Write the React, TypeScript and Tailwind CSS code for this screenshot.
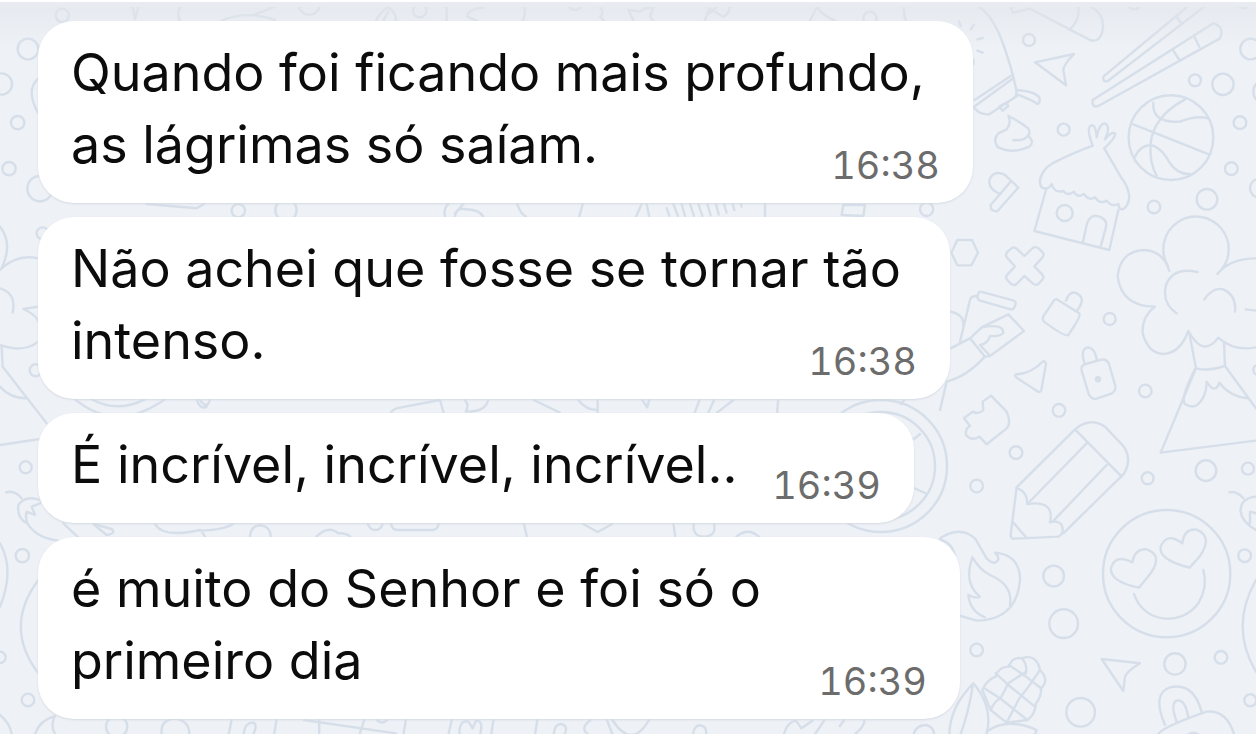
type Message = {
  lines: string[];
  time: string;
  width: string;
};

type Doodle = {
  x: number;
  y: number;
  scale: string;
  circles: number[][];
  paths: string[];
};

const messages: Message[] = [
  {
    lines: ["Quando foi ficando mais profundo,", "as lágrimas só saíam."],
    time: "16:38",
    width: "w-[935px]",
  },
  {
    lines: ["Não achei que fosse se tornar tão", "intenso."],
    time: "16:38",
    width: "w-[912px]",
  },
  {
    lines: ["É incrível, incrível, incrível.."],
    time: "16:39",
    width: "w-[876px]",
  },
  {
    lines: ["é muito do Senhor e foi só o", "primeiro dia"],
    time: "16:39",
    width: "w-[922px]",
  },
];

const doodles: Doodle[] = [
  {
    // chopsticks, basketball, hut
    x: 940,
    y: 0,
    scale: "0.3333",
    circles: [
      [267, 120, 18], [371, 389, 18], [765, 241, 18], [849, 253, 32], [932, 147, 31],
      [900, 368, 19], [874, 506, 19], [801, 598, 31], [642, 621, 19], [693, 413, 127],
      [374, 639, 24], [975, 275, 35], [958, 565, 28], [583, 8, 20], [911, 8, 17],
    ],
    paths: [
      "M118 22Q155 45 185 120Q215 200 230 275L228 288",
      "M104 300L212 228M100 322L218 236M104 325Q120 345 148 343L232 287",
      "M230 270Q290 275 299 295Q300 310 292 312Q275 300 235 285",
      "M178 320L200 308L205 318L188 332Z",
      "M92 88l10-14M112 118l16-4M112 152l16 6M57 64l5 14M100 180v12",
      "M212 22L220 38L270 26L450 120Q480 130 488 90Q495 45 455 22M415 22Q420 60 388 90",
      "M285 187L402 162Q370 195 370 210L378 256Z",
      "M205 348Q240 365 265 385Q272 400 265 408Q285 425 268 440Q215 465 172 440Q158 420 175 400L200 388Q215 370 205 348M220 420Q255 425 267 402",
      "M180 582Q140 565 150 535Q165 510 195 525L235 563L172 634Q150 635 152 615L212 545",
      "M740 22L490 230Q488 250 505 242L790 22M708 48L726 72",
      "M820 70L458 300Q455 325 475 318L840 115Q855 80 820 70M700 152L718 180M762 108L778 140",
      "M458 437Q335 485 318 505Q290 540 305 562Q325 572 335 552Q343 580 370 573Q382 590 402 575Q410 595 432 582Q445 604 466 592Q478 614 500 602Q515 622 535 612Q538 634 552 626Q566 615 568 590Q565 560 545 535L493 445",
      "M458 437Q435 375 458 376Q468 378 470 412Q480 365 497 371Q512 380 495 418Q515 392 526 402Q525 415 493 445",
      "M318 570L283 693L508 750L535 630M428 730L440 675Q450 640 478 650Q505 660 497 685L482 740",
      "M580 373L807 463M735 298Q640 350 632 430Q628 490 650 527M640 308Q635 370 720 365Q770 345 805 355M585 470Q605 430 640 437Q670 450 690 490Q715 525 750 522",
    ],
  },
  {
    // volcano, padlocks, pencil body
    x: 940,
    y: 230,
    scale: "0.3333",
    circles: [
      [509, 267, 18], [616, 483, 19], [357, 541, 19], [228, 668, 19], [798, 722, 31],
      [924, 716, 18], [623, 745, 18], [955, 420, 15], [474, 448, 6], [474, 448, 2],
    ],
    paths: [
      "M52 30L96 30L114 68L94 106L52 106L34 68Z",
      "M253 78L278 54Q287 48 297 56L308 67Q314 75 307 83L283 109L307 134Q314 142 306 150L296 161Q288 168 279 161L253 138L230 162Q221 169 212 161L202 150Q194 142 202 134L225 109L201 83Q194 75 202 66L213 56Q222 49 230 56Z",
      "M122 185L222 212Q230 216 225 228Q221 240 212 238L118 211Q110 206 114 193Q116 184 122 185Z",
      "M110 198Q92 198 90 210L60 335M32 245Q75 255 70 290",
      "M32 355L90 325L125 292L205 253L252 303L150 378L135 380L92 327M135 380Q80 440 20 455L0 540",
      "M125 292Q190 280 190 308Q185 320 150 318Q145 340 120 345L148 375",
      "M350 208L418 250Q425 258 385 315Q375 322 312 275Q305 265 312 256L340 214Q345 206 350 208M378 212Q390 180 410 190Q440 205 412 240",
      "M684 108A98 98 0 1 1 832 132Q870 85 948 85M688 123Q670 62 610 60Q540 65 533 140Q545 230 645 230Q605 260 608 310Q625 370 670 372Q720 370 745 303Q790 385 835 323Q880 365 948 352",
      "M772 126Q700 110 678 165Q665 220 710 250M793 208Q820 170 850 178Q890 195 885 245M918 238L948 242",
      "M748 310L768 415Q810 425 855 408L852 335M768 415L662 668L948 632M855 408L948 535",
      "M765 418Q720 505 735 522Q755 535 772 525Q800 500 800 455Q825 495 838 458Q870 500 925 505",
      "M425 422Q420 408 437 402L485 389Q500 387 507 402L526 468Q528 482 516 490L468 507Q454 508 446 492ZM433 398Q420 355 445 352Q465 355 470 388",
      "M228 433Q272 432 307 396Q316 390 318 402L304 480Q302 488 292 484L230 443Q222 436 228 433Z",
      "M153 497L200 545Q215 580 200 595L140 643L118 620Q95 635 78 615Q75 595 90 588L72 565L98 545Q115 555 130 540L128 515Z",
      "M405 598Q450 560 495 590L550 648Q577 685 553 730L370 910M405 598L230 772M405 598L545 740M440 640L262 822M500 705L338 875",
    ],
  },
  {
    // pencil tip, flame, smiley, corn
    x: 940,
    y: 480,
    scale: "0.3333",
    circles: [
      [110, 18, 19], [341, 288, 31], [371, 431, 43], [110, 510, 19], [705, 552, 32],
      [843, 532, 19], [422, 697, 43], [931, 661, 18], [914, 227, 19], [680, 281, 191],
      [760, 785, 27],
    ],
    paths: [
      "M230 22L212 165Q212 178 225 176L355 170Q375 160 365 135Q355 120 330 127Q345 60 262 72Q262 35 232 25M218 125L258 172",
      "M0 175Q60 135 105 175Q120 200 140 235Q165 260 175 238Q175 225 165 218Q240 225 240 300Q230 420 110 422L62 408",
      "M97 232Q70 310 120 350Q110 358 85 345Q90 395 135 412M97 232Q120 270 150 285Q220 315 210 375M0 178Q40 190 45 230",
      "M597 323Q510 305 513 265Q525 220 577 247Q585 205 620 208Q670 225 632 280ZM749 263Q655 240 662 200Q680 155 727 190Q732 145 770 149Q820 170 780 228Z",
      "M582 342C610 430 725 440 775 370Q805 320 790 270",
      "M100 610Q30 680 28 762M100 610Q160 680 140 762M98 620Q85 700 62 762M140 755Q200 710 290 750L285 762",
      "M127 630Q140 600 167 590Q175 560 207 560Q215 530 245 535Q290 520 300 570Q330 600 303 625Q305 650 288 670Q285 705 262 720L200 728L152 690Z",
      "M133 625L180 655L262 720M167 580L205 615L285 680M207 555L258 590L303 625M152 690Q165 660 182 655L205 610L258 575M200 728L238 655L262 625L300 570M245 535Q262 550 258 580",
      "M485 537L600 550Q560 575 555 590L550 633Z",
      "M675 735Q635 640 690 622Q760 605 785 695M655 762Q670 740 800 695Q860 690 882 762M710 725Q690 670 710 662Q735 655 745 712",
      "M868 37Q890 32 910 55M948 50Q900 55 902 95Q905 125 948 150M930 130L930 95L948 100M948 300Q868 440 948 575",
    ],
  },
  {
    x: 0,
    y: 0,
    scale: "0.3333",
    circles: [
      [187, 46, 20], [84, 147, 31], [4, 252, 32], [53, 368, 20], [27, 506, 20],
      [120, 566, 38], [715, 632, 20], [858, 630, 32], [928, 12, 32], [1259, 32, 20],
    ],
    paths: [
      "M115 235Q75 270 115 340M398 22L405 58L415 22M540 22Q530 40 540 62M665 62Q740 30 825 60M760 45L820 22",
      "M1128 62Q1145 30 1165 22Q1190 40 1188 62M1150 62L1165 35M1340 22v40M1450 22Q1400 30 1402 50L1430 62",
      "M440 612L590 625L612 612M1335 650Q1330 625 1345 612M1365 650Q1370 620 1400 628Q1440 630 1450 650M1365 640L1390 612",
    ],
  },
  {
    x: 0,
    y: 190,
    scale: "0.3333",
    circles: [[128, 130, 18], [107, 541, 18], [77, 832, 18]],
    paths: [
      "M0 110Q40 160 5 235M0 240Q50 190 115 205M0 295Q50 310 38 368M115 350L70 357Q110 375 115 395M0 465Q70 490 115 455",
      "M5 468L8 530L140 700M0 590Q30 625 78 625M0 765L115 748",
      "M225 628Q350 730 495 628M275 628Q350 670 435 628M590 628Q600 660 620 650",
    ],
  },
  {
    x: 0,
    y: 460,
    scale: "0.3333",
    circles: [[67, 287, 20], [84, 720, 19], [0, 592, 17], [350, 800, 32]],
    paths: [
      "M18 97Q45 90 65 115M130 125Q80 100 55 135Q50 175 82 190Q75 170 80 155L105 165L95 140L120 130",
      "M82 190Q110 235 175 242M190 190L235 232M280 192L320 225Q350 220 335 207ZM465 192Q490 235 600 210",
      "M0 250Q45 330 0 440M115 360Q10 500 115 640M0 765Q30 790 35 822M105 822Q120 780 165 768Q150 795 165 822M485 822Q480 780 525 775Q570 785 568 822",
    ],
  },
  {
    x: 500,
    y: 0,
    scale: "0.3333",
    circles: [[1110, 55, 20], [225, 10, 20], [1280, 628, 20]],
    paths: [
      "M75 22Q75 50 68 62M300 22Q315 40 300 50L312 62M400 60L385 30L420 35Q440 20 460 22L450 50L460 62",
      "M615 60L628 25L670 50Q690 40 688 22M628 40L650 22M930 62L950 22Q975 50 1005 62M1212 22Q1210 45 1218 62",
      "M52 612Q60 640 78 650M248 612L238 650M408 650L425 612M440 612L448 650M795 612L795 650M1030 615L1095 615L1090 648L1025 645Z",
      "M500 625l8 22M520 612l14 36M545 612l10 36M570 612l12 36M595 612l12 36M622 612l10 34M648 612l8 32M672 612l8 26M698 612l5 18M722 612l3 8",
    ],
  },
  {
    // magnifier ring behind the third bubble
    x: 881,
    y: 466,
    scale: "1",
    circles: [[0, 0, 66], [0, 0, 54]],
    paths: ["M33 -27L39 -32M33 22L46 28"],
  },
  {
    // strip under the second bubble
    x: 200,
    y: 380,
    scale: "0.485 0.3333",
    circles: [],
    paths: [
      "M394 98Q398 85 415 82L495 60L502 98M546 60Q556 75 548 95Q590 95 594 60M688 60L742 98M780 60Q795 90 820 90M820 60V98M912 60L922 82L926 60",
      "M1030 60L1020 98M1060 60L1048 98M1100 60L1066 98M1192 60L1190 98M1452 60L1445 72M0 60Q15 90 20 60",
    ],
  },
  {
    // strip under the third bubble
    x: 200,
    y: 500,
    scale: "0.485 0.3333",
    circles: [],
    paths: [
      "M0 92Q50 90 68 72M5 98L10 110M103 110Q105 75 126 76Q145 80 146 110M240 110Q265 75 285 100Q300 98 310 110",
      "M346 72Q352 92 363 90Q374 88 376 72M394 72Q396 90 408 90L480 90Q490 88 492 72M668 72L674 110M790 72L820 96L850 72",
      "M976 72L980 110M1018 72Q1015 110 1040 110Q1065 108 1060 72M1106 110Q1130 80 1152 110",
    ],
  },
  {
    // strip under the last bubble
    x: 100,
    y: 700,
    scale: "0.548 0.3333",
    circles: [],
    paths: [
      "M240 60L235 102M262 102Q265 65 280 68Q288 75 280 102M322 60L318 102M372 60L540 100M400 60V102M482 60L474 102M558 60L554 102M505 60Q515 75 524 60",
      "M642 60L636 102M656 102Q655 60 672 64L680 85L686 62Q700 60 694 102M718 60L714 102M798 60L794 102M828 102Q830 70 842 72Q855 78 848 102",
      "M895 60Q875 85 890 102M925 60L935 102M935 60Q970 150 1002 60M1082 102Q1085 75 1096 76Q1108 80 1106 102",
      "M1248 102Q1255 65 1270 62L1280 85L1300 62M1322 60L1305 102M1358 60L1350 78M1395 60Q1395 80 1378 102M1485 100Q1490 75 1508 75Q1520 80 1522 100",
    ],
  },
];

function Wallpaper() {
  return (
    <svg
      className="absolute inset-0 h-full w-full"
      viewBox="0 0 1256 734"
      preserveAspectRatio="xMidYMid slice"
      fill="none"
      stroke="#d6dfe9"
      strokeWidth="2.4"
      strokeLinecap="round"
      strokeLinejoin="round"
      aria-hidden="true"
    >
      {doodles.map((group, i) => (
        <g key={i} transform={`translate(${group.x} ${group.y}) scale(${group.scale})`}>
          {group.circles.map(([cx, cy, r], j) => (
            <circle key={j} cx={cx} cy={cy} r={r} vectorEffect="non-scaling-stroke" />
          ))}
          {group.paths.map((d, j) => (
            <path key={j} d={d} vectorEffect="non-scaling-stroke" />
          ))}
        </g>
      ))}
    </svg>
  );
}

function Bubble({ lines, time, width }: Message) {
  const single = lines.length === 1;
  return (
    <li
      className={`${width} flex max-w-full rounded-[36px] bg-white px-[33px] pt-4 pb-[22px] shadow-[0_1px_2px_#d5dae2] ${
        single ? "items-end justify-between" : "flex-col"
      }`}
    >
      <p className="text-[52px] leading-[72px] whitespace-nowrap text-[#0c0c0c]">
        {lines.map((line) => (
          <span key={line} className="block">
            {line}
          </span>
        ))}
      </p>
      <time
        className={`self-end text-[38px] leading-[48px] text-[#6c6c6c] tabular-nums ${
          single ? "-mb-2" : "-mt-10 -mb-2"
        }`}
      >
        {time}
      </time>
    </li>
  );
}

export default function App() {
  return (
    <main className="relative min-h-screen overflow-hidden bg-[#eef1f6] font-['Inter',sans-serif]">
      <Wallpaper />
      <div className="absolute inset-x-0 top-0 h-12 bg-linear-to-b from-[#e3e6ec]/80 to-transparent" />
      <div className="absolute inset-x-0 top-0 h-[7px] border-t-2 border-white bg-[#e8ebf0]" />
      <ul className="relative flex flex-col gap-[14px] pt-[21px] pr-6 pb-[14px] pl-[38px]">
        {messages.map((message) => (
          <Bubble key={message.lines[0]} {...message} />
        ))}
      </ul>
    </main>
  );
}
